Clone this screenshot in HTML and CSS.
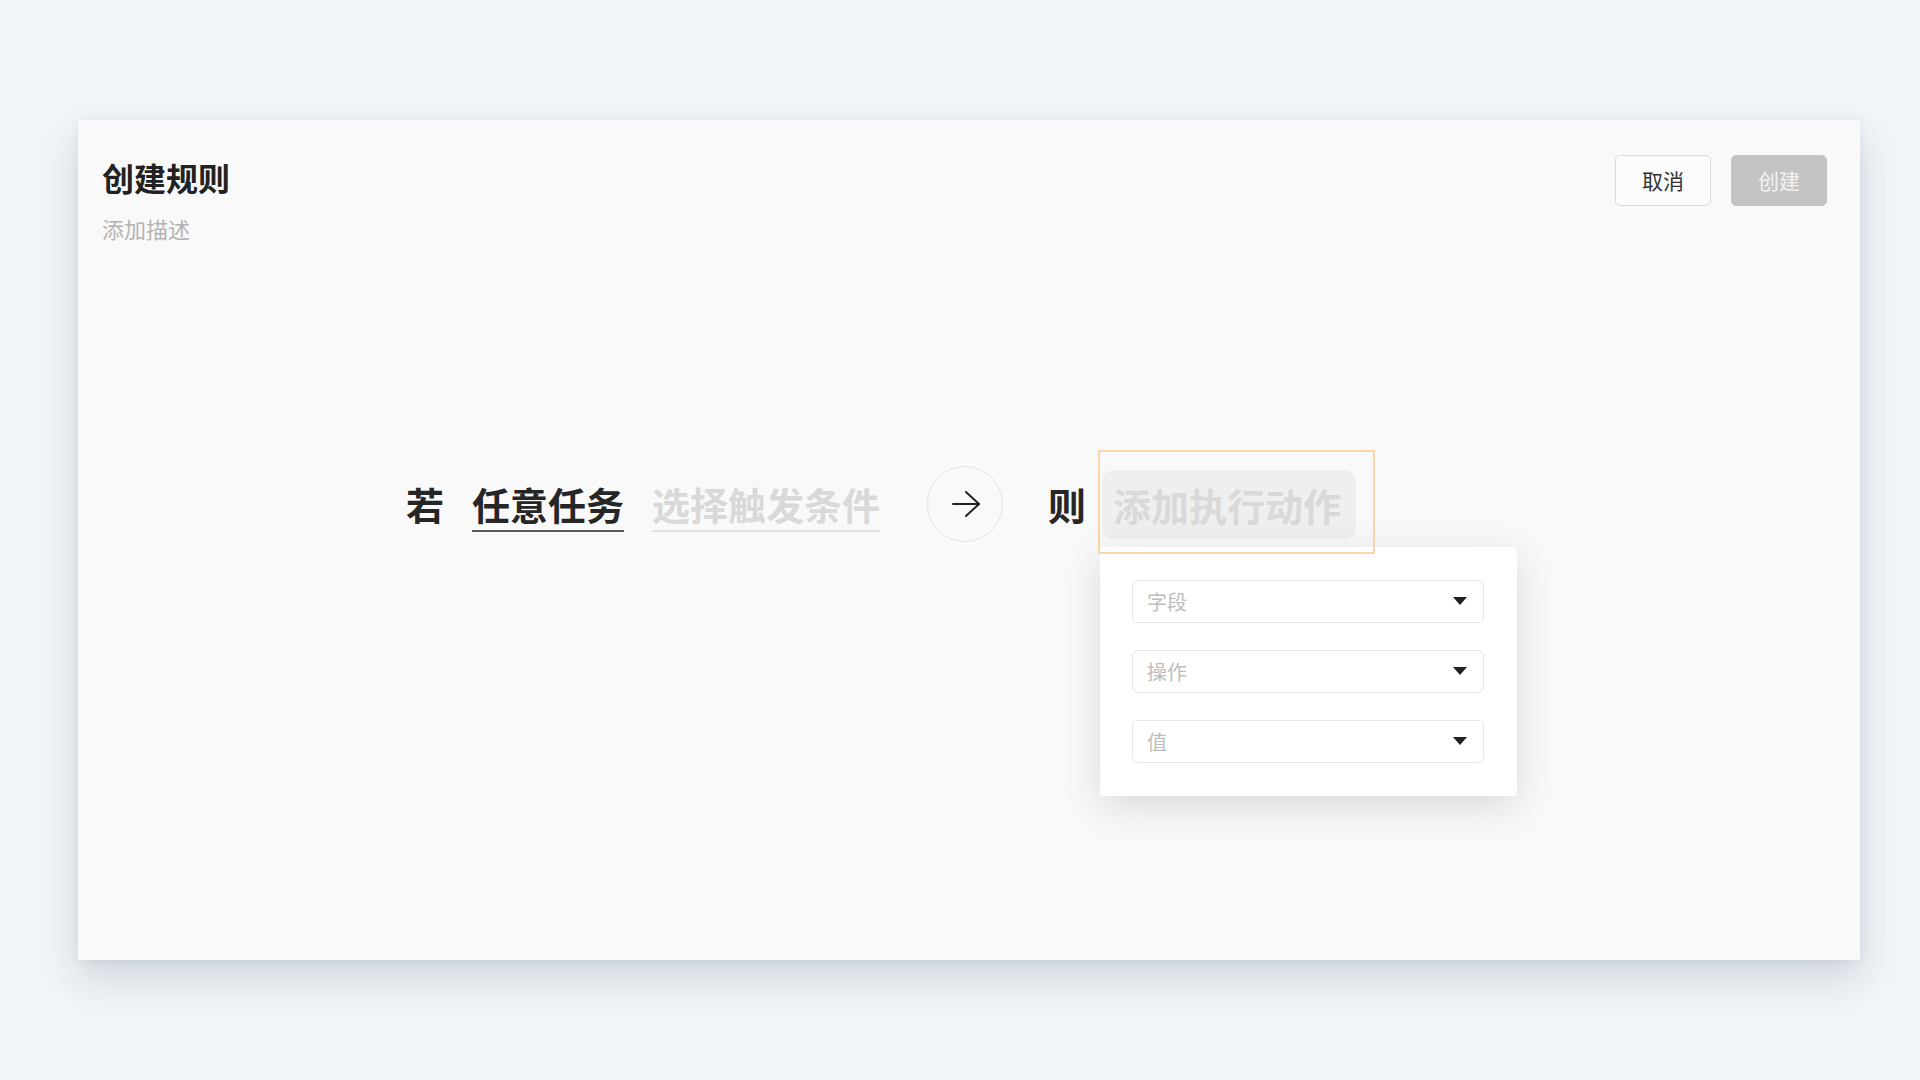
FILE: index.html
```html
<!DOCTYPE html>
<html lang="zh-CN">
<head>
  <meta charset="UTF-8" />
  <title>创建规则</title>
  <link rel="stylesheet" href="styles.css">
</head>
<body>
  <div class="page">
    <div class="card">
      <div class="card__head">
        <div class="card__titles">
          <h1 class="card__title">创建规则</h1>
          <p class="card__desc">添加描述</p>
        </div>
        <div class="card__actions">
          <button class="btn btn--ghost">取消</button>
          <button class="btn btn--disabled">创建</button>
        </div>
      </div>

      <!-- rule sentence -->
      <div class="rule">
        <span class="rule__word">若</span>
        <span class="rule__pick rule__pick--set">任意任务</span>
        <span class="rule__pick rule__pick--empty">选择触发条件</span>
        <span class="rule__arrow">
          <svg width="30" height="28" viewBox="0 0 30 28" fill="none" stroke="#222" stroke-width="2" stroke-linecap="round" stroke-linejoin="round">
            <path d="M2 14h26"/>
            <path d="M15 2l13 12-13 12"/>
          </svg>
        </span>
        <span class="rule__word rule__word--then">则</span>
        <div class="action">
          <span class="action__pill">添加执行动作</span>
          <span class="action__focus"></span>

          <div class="menu">
            <div class="select"><span>字段</span><i class="select__caret"></i></div>
            <div class="select"><span>操作</span><i class="select__caret"></i></div>
            <div class="select"><span>值</span><i class="select__caret"></i></div>
          </div>
        </div>
      </div>
    </div>
  </div>
</body>
</html>
```

FILE: styles.css
```css
*{margin:0;padding:0;box-sizing:border-box;}
body{
  font-family:"Noto Sans CJK SC","Noto Sans",sans-serif;
  background:#f1f5f9;
  color:#222;
}
.page{padding:120px 60px 120px 78px;}
.card{
  height:840px;
  background:#f9f9f9;
  padding:35px 33px 0 24px;
  box-shadow:0 18px 36px rgba(40,50,70,0.16),0 2px 10px rgba(40,50,70,0.06);
}
.card__head{display:flex;justify-content:space-between;align-items:flex-start;}
.card__title{font-size:32px;line-height:44px;font-weight:700;color:#222;}
.card__desc{margin-top:14px;font-size:22px;line-height:30px;color:#b3b3b3;}
.card__actions{display:flex;gap:20px;}
.btn{
  width:96px;height:51px;border-radius:5px;
  font-family:inherit;font-size:21px;
  display:flex;align-items:center;justify-content:center;
  padding-bottom:2px;
}
.btn--ghost{background:#fbfbfb;border:1px solid #dadada;color:#333;}
.btn--disabled{background:#c4c4c4;border:1px solid #c4c4c4;color:#f2f2f2;}

.rule{
  display:flex;align-items:center;
  margin-top:209px;margin-left:304px;
  height:104px;
}
.rule__word{font-size:38px;line-height:46px;font-weight:700;color:#262626;}
.rule__pick{
  font-size:38px;line-height:46px;font-weight:700;
  padding:5px 0 3px;border-bottom:2px solid;
  margin-left:28px;
}
.rule__pick--set{color:#262626;border-color:#5a5a5a;}
.rule__pick--empty{color:#d9d9d9;border-color:#e2e2e2;}
.rule__arrow{
  width:76px;height:76px;border-radius:50%;
  border:1px solid #e3e3e3;margin-left:47px;
  display:flex;align-items:center;justify-content:center;
}
.rule__arrow svg{margin-left:2px;}
.rule__word--then{margin-left:45px;}

.action{position:relative;margin-left:16px;}
.action__pill{
  display:block;
  height:69px;width:254px;
  background:#efefef;border-radius:12px;
  padding-left:11px;
  font-size:38px;line-height:69px;font-weight:700;color:#d9d9d9;
  white-space:nowrap;
}
.action__focus{
  position:absolute;top:-20px;left:-4px;right:-19px;bottom:-15px;
  border:2px solid #f8d5ab;
  z-index:2;pointer-events:none;
}
.menu{
  position:absolute;top:77px;left:-2px;z-index:1;
  width:417px;
  background:#fff;border-radius:4px;
  padding:33px 33px 33px 32px;
  display:flex;flex-direction:column;gap:27px;
  box-shadow:0 10px 40px rgba(0,0,0,0.13);
}
.select{
  height:43px;border:1px solid #e6e6e6;border-radius:6px;
  display:flex;align-items:center;justify-content:space-between;
  padding:0 16px 0 14px;
  font-size:20px;color:#bdbdbd;
}
.select__caret{
  width:0;height:0;
  border-left:7px solid transparent;border-right:7px solid transparent;
  border-top:8px solid #222;
}
```
